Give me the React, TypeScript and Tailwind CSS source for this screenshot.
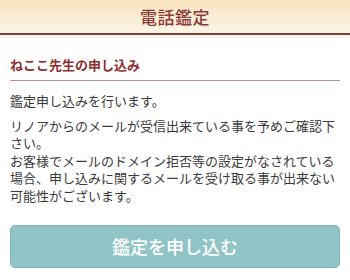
export default function App() {
  return (
    <div className="w-[350px] h-[280px] bg-white overflow-hidden font-['Noto_Sans_CJK_JP',sans-serif]">
      <header className="h-[35px] border-b-2 border-[#8c3b38] bg-gradient-to-b from-[#f7e2bd] to-[#fdf5e8] flex items-center justify-center">
        <h1 className="text-[17px] leading-none font-medium text-[#8c3b38] tracking-[0.5px]">電話鑑定</h1>
      </header>
      <div className="h-[6px] bg-gradient-to-b from-[#f9eeee] to-white" />

      <section className="px-[10px]">
        <h2 className="mt-[15px] pb-[6px] border-b border-[#b89290] text-[13px] leading-[18px] font-bold text-[#8c3030]">
          ねここ先生の申し込み
        </h2>
        <div className="mt-[11px] text-[13px] leading-[17.5px] text-[#3a3a3a]">
          <p>鑑定申し込みを行います。</p>
          <p className="mt-[7px]">
            リノアからのメールが受信出来ている事を予めご確認下さい。
            <br />
            お客様でメールのドメイン拒否等の設定がなされている場合、申し込みに関するメールを受け取る事が出来ない可能性がございます。
          </p>
        </div>
        <button className="mt-[21px] w-full h-[43px] rounded-[5px] border border-[#7fb3b6] bg-[#90c4c7] text-white text-[18px] font-medium">
          鑑定を申し込む
        </button>
      </section>
    </div>
  );
}
